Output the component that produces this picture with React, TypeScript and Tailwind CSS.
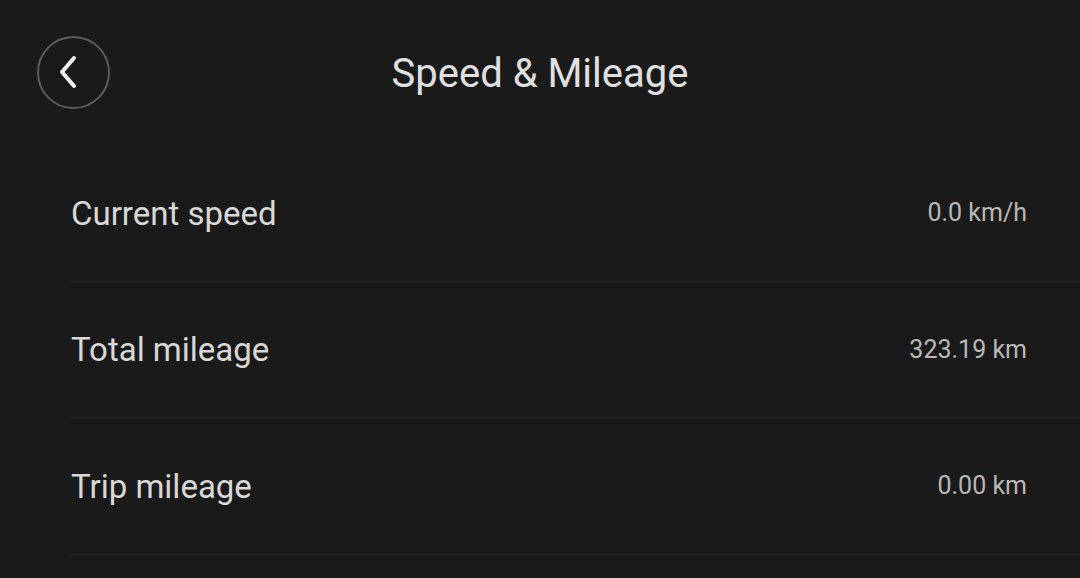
import React from "react";

const rows = [
  { label: "Current speed", value: "0.0 km/h" },
  { label: "Total mileage", value: "323.19 km" },
  { label: "Trip mileage", value: "0.00 km" },
];

export default function App() {
  return (
    <div
      className="w-[1080px] h-[578px] overflow-hidden bg-[#1a1a1a] text-[#dcdcdc]"
      style={{ fontFamily: "Roboto, 'Noto Sans', sans-serif" }}
    >
      <div className="relative h-[145px] flex items-center justify-center">
        <button className="absolute left-[37px] top-[36px] w-[73px] h-[73px] rounded-full border-2 border-[#5c5c5c] flex items-center justify-center">
          <svg width="40" height="40" viewBox="0 0 40 40" fill="none" className="-ml-[6px]">
            <path d="M23 5 L11 19 L23 33" stroke="#f0f0f0" strokeWidth="4" strokeLinecap="round" strokeLinejoin="round" />
          </svg>
        </button>
        <h1 className="text-[40px] leading-none text-[#e0e0e0] mt-[3px]">Speed &amp; Mileage</h1>
      </div>
      <div className="pl-[70px]">
        {rows.map((r) => (
          <div key={r.label} className="h-[136.5px] flex items-center justify-between pr-[53px] border-b border-[#262626]">
            <span className="text-[33px] text-[#d8d8d8] ml-[1px] mt-[1px]">{r.label}</span>
            <span className="text-[25px] text-[#b8b8b8]">{r.value}</span>
          </div>
        ))}
      </div>
    </div>
  );
}
